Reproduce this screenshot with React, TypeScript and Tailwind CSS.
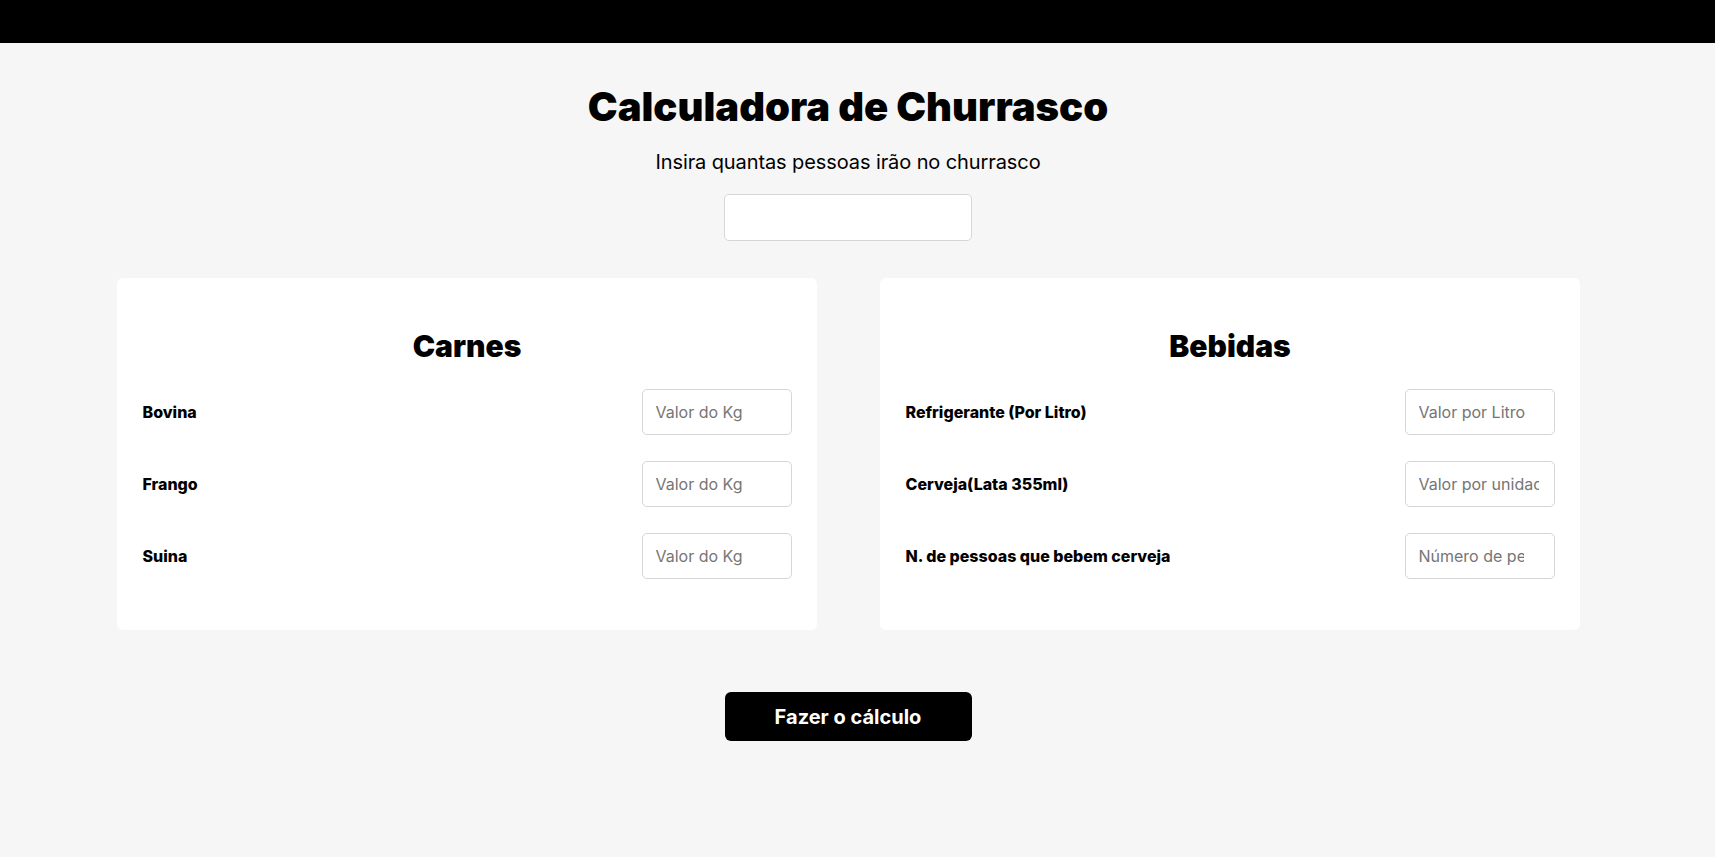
import { useState } from "react";

interface Campo {
  label: string;
  placeholder: string;
  type?: string;
}

const carnes: Campo[] = [
  { label: "Bovina", placeholder: "Valor do Kg" },
  { label: "Frango", placeholder: "Valor do Kg" },
  { label: "Suina", placeholder: "Valor do Kg" },
];

const bebidas: Campo[] = [
  { label: "Refrigerante (Por Litro)", placeholder: "Valor por Litro" },
  { label: "Cerveja(Lata 355ml)", placeholder: "Valor por unidade" },
  { label: "N. de pessoas que bebem cerveja", placeholder: "Número de pessoas", type: "number" },
];

function Card({ title, campos }: { title: string; campos: Campo[] }) {
  return (
    <div className="w-[700px] bg-white rounded-[6px] pt-[50px] pb-[51px] pl-[26px] pr-[25px]">
      <h2 className="text-center text-[30px] leading-[36px] font-black text-black mb-[25px]">
        {title}
      </h2>
      <div className="flex flex-col gap-[26px]">
        {campos.map((c) => (
          <div key={c.label} className="flex items-center justify-between">
            <label className="text-[16px] font-extrabold text-black">{c.label}</label>
            <input
              type={c.type ?? "text"}
              placeholder={c.placeholder}
              className="w-[150px] h-[46px] border border-[#d6d6d6] rounded-[5px] pl-[13px] pr-[15px] text-[16px] bg-white outline-none placeholder:text-[#757575]"
            />
          </div>
        ))}
      </div>
    </div>
  );
}

export default function App() {
  const [pessoas, setPessoas] = useState("");

  return (
    <div className="min-h-[857px] bg-[#f6f6f6] font-['Inter',sans-serif] text-black">
      <header className="h-[43px] bg-black" />

      <main className="flex flex-col items-center pr-[19px] pt-[40px] pb-10">
        <h1 className="text-[40px] leading-[48px] font-black">Calculadora de Churrasco</h1>
        <p className="mt-[17px] text-[20px] leading-[28px] tracking-[-0.1px]">
          Insira quantas pessoas irão no churrasco
        </p>
        <input
          type="number"
          value={pessoas}
          onChange={(e) => setPessoas(e.target.value)}
          className="mt-[18px] w-[248px] h-[47px] border border-[#d6d6d6] rounded-[5px] px-[13px] bg-white outline-none"
        />

        <div className="mt-[37px] flex justify-center gap-[63px]">
          <Card title="Carnes" campos={carnes} />
          <Card title="Bebidas" campos={bebidas} />
        </div>

        <button className="mt-[62px] w-[247px] h-[49px] rounded-[6px] bg-black text-white text-[20px] font-bold">
          Fazer o cálculo
        </button>
      </main>
    </div>
  );
}
